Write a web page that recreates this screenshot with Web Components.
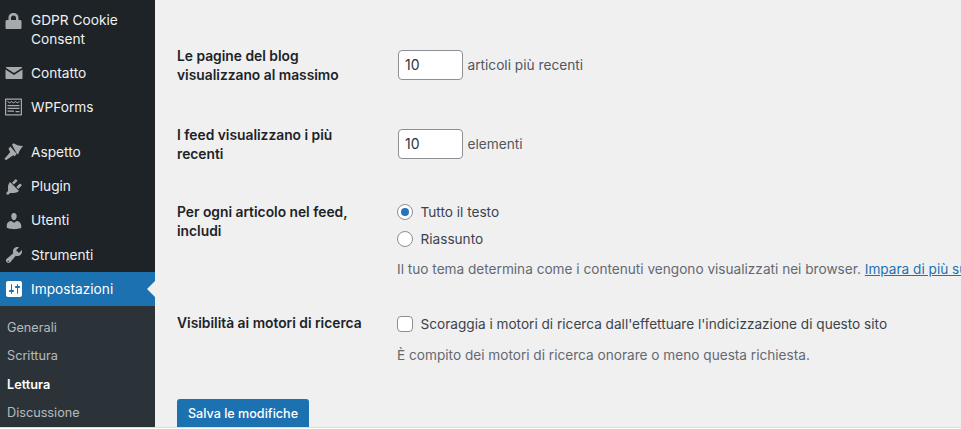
<!DOCTYPE html>
<html><head><meta charset="utf-8">
<style>
html,body{margin:0;padding:0;height:429px;overflow:hidden;background:#f0f0f1}
body{font-family:Inter,"Liberation Sans",sans-serif}
</style></head><body>
<wp-admin>
  <wp-sidebar slot="side">
    <wp-item style="height:56px;padding-top:10.5px;align-items:flex-start" icon="lock"><span>GDPR Cookie<br>Consent</span></wp-item>
    <wp-item icon="mail">Contatto</wp-item>
    <wp-item icon="forms">WPForms</wp-item>
    <wp-gap></wp-gap>
    <wp-item icon="brush">Aspetto</wp-item>
    <wp-item icon="plug">Plugin</wp-item>
    <wp-item icon="user">Utenti</wp-item>
    <wp-item icon="wrench">Strumenti</wp-item>
    <wp-item icon="sliders" current>Impostazioni</wp-item>
    <wp-submenu>
      <wp-subitem>Generali</wp-subitem>
      <wp-subitem>Scrittura</wp-subitem>
      <wp-subitem current>Lettura</wp-subitem>
      <wp-subitem>Discussione</wp-subitem>
    </wp-submenu>
  </wp-sidebar>
  <wp-form slot="main">
    <wp-row label="Le pagine del blog visualizzano al massimo" h="79"><wp-number value="10">articoli più recenti</wp-number></wp-row>
    <wp-row label="I feed visualizzano i più recenti" h="77"><wp-number value="10">elementi</wp-number></wp-row>
    <wp-row label="Per ogni articolo nel feed, includi" h="111.5">
      <wp-choice type="radio" checked style="margin-top:-4px">Tutto il testo</wp-choice>
      <wp-choice type="radio">Riassunto</wp-choice>
      <wp-desc style="margin-top:7px">Il tuo tema determina come i contenuti vengono visualizzati nei browser. <a>Impara di più sui feed</a></wp-desc>
    </wp-row>
    <wp-row label="Visibilità ai motori di ricerca" h="85">
      <wp-choice type="checkbox" style="margin-top:-4px">Scoraggia i motori di ricerca dall'effettuare l'indicizzazione di questo sito</wp-choice>
      <wp-desc style="margin-top:8.5px">È compito dei motori di ricerca onorare o meno questa richiesta.</wp-desc>
    </wp-row>
    <wp-button>Salva le modifiche</wp-button>
  </wp-form>
</wp-admin>
<wp-edge></wp-edge>
<script>
const ICONS={
lock:'<path fill-rule="evenodd" d="M4.500 9V6.800C4.500 4 6.700 2 9.500 2s5 2 5 4.800V9h1.500c.9 0 1.500.6 1.500 1.500v6.200c0 .8-.6 1.300-1.300 1.300H2.800c-.7 0-1.300-.5-1.300-1.300v-6.200C1.500 9.600 2.100 9 3 9zM7 9h5V6.800C12 5.400 10.900 4.400 9.500 4.400S7 5.400 7 6.800z"/>',
mail:'<path d="M2.500 4h15c.6 0 .8.5.4.9L10 10 2.100 4.900c-.4-.4-.1-.9.4-.9z"/><path d="M1.500 6.500L10 12l8.500-5.500V15c0 .6-.4 1-1 1h-15c-.6 0-1-.4-1-1z"/>',
forms:'<path fill-rule="evenodd" d="M2 1.500h15c.6 0 1 .4 1 1v15c0 .6-.4 1-1 1H2c-.6 0-1-.4-1-1v-15c0-.6.4-1 1-1zM2.200 2.700v14.600h14.600V2.700z"/><path d="M3.500 3.600l2 1.800 2-1.500 2 1.500 2-1.500 2 1.500 2-1.500v1.200l-2 1.500-2-1.500-2 1.500-2-1.500-2 1.500-2-1.800zM3.500 8h12v1.300h-12zM3.500 10.700h12V12h-12zM3.500 13.400H10v1.300H3.500zM11.500 14h4v1.200h-4z"/>',
brush:'<path d="M8 2.800L9.500 1.200C12 2.500 15 4 19 4c-1.700 2.200-3.800 4.600-4.500 7.500l-1.200 1z"/><path d="M6.300 4.500l6.300 7.300-1.800 2.400c-.9-.8-2-.9-3 0L2 18.200.5 16.800l5-5.700c.8-1 .6-2-.3-2.900l-.7-1.400z"/>',
plug:'<path d="M13.110 4.360L9.870 7.600 8 5.730l3.240-3.240c.35-.34 1.050-.2 1.560.32.52.51.66 1.210.31 1.550zm-8 1.770l.91-1.120 9.010 9.010-1.190.84c-.71.71-2.630 1.160-3.820 1.160H6.140L4.900 17.260c-.59.59-1.540.59-2.120 0-.59-.58-.59-1.530 0-2.120l1.240-1.240v-3.880c0-1.130.4-3.190 1.090-3.890zm7.260 3.970l3.240-3.240c.34-.35 1.040-.21 1.550.31.52.51.66 1.210.31 1.550l-3.240 3.250z"/>',
user:'<path d="M10 9.250c-2.270 0-2.730-3.440-2.730-3.440C7 4.020 7.820 2 9.970 2c2.160 0 2.980 2.020 2.710 3.810 0 0-.41 3.440-2.680 3.440zm0 2.570L12.720 10c2.390 0 4.520 2.330 4.520 4.530v2.490s-3.650 1.130-7.240 1.130c-3.650 0-7.240-1.130-7.240-1.130v-2.490c0-2.250 1.940-4.480 4.470-4.480z"/>',
wrench:'<path d="M16.680 9.770c-1.340 1.340-3.300 1.670-4.950.99l-5.410 6.520c-.99.99-2.590.99-3.580 0s-.99-2.590 0-3.570l6.520-5.420c-.68-1.650-.35-3.610.99-4.950 1.280-1.280 3.120-1.620 4.720-1.060l-2.890 2.890 2.820 2.820 2.860-2.870c.53 1.580.18 3.390-1.080 4.670zM3.810 16.740c.25.25.65.25.9 0 .25-.25.25-.65 0-.9-.25-.25-.65-.25-.9 0-.25.25-.25.65 0 .9z"/>',
sliders:'<path d="M18 16V4c0-1.100-.9-2-2-2H4c-1.100 0-2 .9-2 2v12c0 1.100.9 2 2 2h12c1.100 0 2-.9 2-2zM8 11h1c.55 0 1 .45 1 1s-.45 1-1 1H8v1.500c0 .28-.22.5-.5.5s-.5-.22-.5-.5V13H6c-.55 0-1-.45-1-1s.45-1 1-1h1V5.500c0-.28.22-.5.5-.5s.5.22.5.5V11zm5-2h-1c-.55 0-1-.45-1-1s.45-1 1-1h1V5.500c0-.28.22-.5.5-.5s.5.22.5.5V7h1c.55 0 1 .45 1 1s-.45 1-1 1h-1v5.500c0 .28-.22.5-.5.5s-.5-.22-.5-.5V9z"/>'
};
function def(name,css,html){
  customElements.define(name,class extends HTMLElement{
    connectedCallback(){
      if(this.shadowRoot)return;
      const r=this.attachShadow({mode:'open'});
      r.innerHTML='<style>'+css+'</style>'+(typeof html==='function'?html(this):html);
    }
  });
}
def('wp-edge',':host{display:block;box-sizing:border-box;height:2px;border-top:1px solid #dcdcde;background:#fff}','');
def('wp-gap',':host{display:block;flex:none;height:11px}','');
def('wp-admin',':host{display:grid;grid-template-columns:155px 1fr;height:427px;overflow:hidden;background:#f0f0f1;color:#3c434a}','<slot name="side"></slot><slot name="main"></slot>');
def('wp-sidebar',':host{display:flex;flex-direction:column;background:#1d2327;height:427px;overflow:hidden}','<slot></slot>');
def('wp-item',':host{display:flex;align-items:center;box-sizing:border-box;flex:none;height:34.2px;padding-left:3.5px;color:#f0f0f1;font-size:13.7px;line-height:19px;position:relative}:host([current]){background:#1c71b0;color:#fff}svg{width:20px;height:20px;fill:#a7aaad;flex:none;margin-right:7.5px}:host([current]) svg{fill:#fff}.t{flex:1}:host([current]) .a{display:block}.a{display:none;position:absolute;right:0;top:50%;margin-top:-8px;border:8px solid transparent;border-right-color:#f0f0f1;border-left:0}',
 el=>`<svg viewBox="0 0 20 20">${ICONS[el.getAttribute('icon')]}</svg><div class="t"><slot></slot></div><div class="a"></div>`);
def('wp-submenu',':host{display:block;flex:none;background:#2c3338;padding:7.6px 0}','<slot></slot>');
def('wp-subitem',':host{display:block;height:28.3px;line-height:28.3px;padding-left:7px;font-size:12.7px;color:rgba(240,246,252,.7)}:host([current]){color:#fff;font-weight:600}','<slot></slot>');
def('wp-form',':host{display:block;padding:46.5px 0 0 22px;overflow:hidden;height:427px;box-sizing:border-box}','<slot></slot>');
def('wp-row',':host{display:grid;grid-template-columns:220px max-content;box-sizing:border-box}.l{font-weight:600;color:#1d2327;font-size:13.8px;line-height:19px;width:185px}',
 el=>{el.style.height=el.getAttribute('h')+'px';return `<div class="l">${el.getAttribute('label')}</div><div class="c"><slot></slot></div>`});
def('wp-number',':host{display:flex;align-items:center;gap:4.5px;color:#50575e;margin:3.5px 0 0 1px;font-size:13.7px}.b{box-sizing:border-box;width:65px;height:30px;background:#fff;border:1px solid #8c8f94;border-radius:4px;padding:0 6px;line-height:28px;color:#2c3338;font-size:14px}',
 el=>`<div class="b">${el.getAttribute('value')}</div><slot></slot>`);
def('wp-choice',':host{display:flex;align-items:center;gap:7.5px;height:27px;color:#3c434a;font-size:13.62px}.i{box-sizing:border-box;width:16px;height:16px;background:#fff;border:1px solid #8c8f94;flex:none;display:flex;align-items:center;justify-content:center}.radio{border-radius:50%}.checkbox{border-radius:4px}.d{width:8px;height:8px;border-radius:50%;background:#2675bb}',
 el=>`<div class="i ${el.getAttribute('type')}">${el.hasAttribute('checked')?'<div class="d"></div>':''}</div><slot></slot>`);
def('wp-desc',':host{display:block;color:#646970;font-size:13.63px;line-height:19px;white-space:nowrap}::slotted(a){color:#2271b1;text-decoration:underline}','<slot></slot>');
def('wp-button',':host{display:block;width:132px;box-sizing:border-box;height:32px;background:#1c71b0;color:#fff;border-radius:3px;text-align:center;line-height:30px;font-size:12.6px;font-weight:500}','<slot></slot>');
</script>
</body></html>
